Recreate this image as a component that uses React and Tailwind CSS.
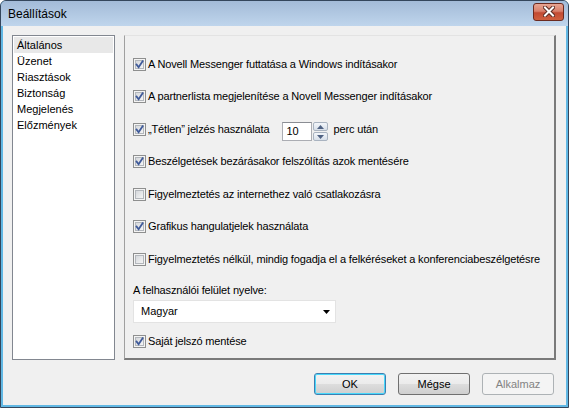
import React from "react";

const font = { fontFamily: '"Liberation Sans", Arial, sans-serif' };

const Check = ({ checked }) => (
  <svg width="13" height="13" viewBox="0 0 13 13" className="shrink-0">
    <defs>
      <linearGradient id="cbg" x1="0" y1="0" x2="1" y2="1">
        <stop offset="0" stopColor="#d3d6da" />
        <stop offset="1" stopColor="#f7f7f7" />
      </linearGradient>
    </defs>
    <rect x="0.5" y="0.5" width="12" height="12" fill="#f4f4f4" stroke="#8e8f8f" />
    <rect x="2.5" y="2.5" width="8" height="8" fill="url(#cbg)" stroke="#b3b7bc" />
    {checked && (
      <path
        d="M3.6 6.6 L5.6 9.2 L9.6 3.2"
        fill="none"
        stroke="#3f5a9a"
        strokeWidth="1.8"
        strokeLinecap="square"
      />
    )}
  </svg>
);

const Row = ({ checked, children, className = "" }) => (
  <div className={`flex h-[13px] items-center ${className}`}>
    <Check checked={checked} />
    <span className="ml-[2px] whitespace-nowrap text-[11px] leading-[13px] tracking-[-0.15px] text-black">
      {children}
    </span>
  </div>
);

const Spinner = () => (
  <div className="ml-[13px] -mt-[1px] flex h-[19px]">
    <div className="flex w-[30px] items-center border border-[#abadb3] border-t-[#8a8d93] bg-white pl-[3px] text-[11px] text-black">
      10
    </div>
    <div className="ml-[1px] flex w-[15px] flex-col gap-[1px]">
      <div className="flex h-[9px] items-center justify-center rounded-[2px] border border-[#a9b3c0] bg-gradient-to-b from-[#f3f6fa] to-[#d7dfe9]">
        <svg width="7" height="4" viewBox="0 0 7 4">
          <path d="M0 4 L3.5 0 L7 4 Z" fill="#4f6283" />
        </svg>
      </div>
      <div className="flex h-[9px] items-center justify-center rounded-[2px] border border-[#a9b3c0] bg-gradient-to-b from-[#f3f6fa] to-[#d7dfe9]">
        <svg width="7" height="4" viewBox="0 0 7 4">
          <path d="M0 0 L3.5 4 L7 0 Z" fill="#4f6283" />
        </svg>
      </div>
    </div>
  </div>
);

const Button = ({ children, variant }) => {
  const border =
    variant === "default"
      ? "border-[#3c7fb1] shadow-[inset_0_0_0_1px_#48d8fb]"
      : variant === "disabled"
      ? "border-[#adb2b5]"
      : "border-[#707070]";
  const bg =
    variant === "disabled"
      ? "bg-[#f4f4f4] text-[#838383]"
      : "bg-[linear-gradient(#f2f2f2_0%,#ebebeb_50%,#dddddd_50%,#cfcfcf_100%)] text-black";
  return (
    <div
      className={`flex h-[22px] w-[72px] items-center justify-center rounded-[3px] border text-[11px] ${border} ${bg}`}
    >
      {children}
    </div>
  );
};

const items = ["Általános", "Üzenet", "Riasztások", "Biztonság", "Megjelenés", "Előzmények"];

export default function App() {
  return (
    <div className="h-[408px] w-[569px] bg-white" style={font}>
      <div className="flex h-[408px] w-[569px] flex-col rounded-t-[6px] border border-[#34465c] bg-[#62b8e4]">
        {/* title bar */}
        <div className="flex h-[25px] items-center rounded-t-[5px] bg-gradient-to-b from-[#a3bbd8] to-[#bfd5ec] pl-[7px] pr-[4px]">
          <span className="text-[12px] text-black">Beállítások</span>
          <div className="ml-auto flex h-[18px] w-[31px] -mt-[4px] items-center justify-center rounded-[3px] border border-[#6b2a20] bg-[linear-gradient(#e8a593_0%,#d9806c_45%,#c24a33_55%,#d0603f_100%)]">
            <svg width="12" height="11" viewBox="0 0 12 11">
              <path
                d="M2 1.5 L10 9.5 M10 1.5 L2 9.5"
                stroke="#5a2a22"
                strokeWidth="4"
                strokeLinecap="square"
              />
              <path
                d="M2 1.5 L10 9.5 M10 1.5 L2 9.5"
                stroke="#ffffff"
                strokeWidth="2"
                strokeLinecap="square"
              />
            </svg>
          </div>
        </div>

        {/* client area */}
        <div className="mx-[2px] mb-[2px] flex flex-1 flex-col bg-[#f0f0f0]">
          <div className="mt-[9px] flex">
            {/* list */}
            <div className="ml-[9px] h-[325px] w-[103px] border border-[#828790] bg-white p-[1px]">
              {items.map((it, i) => (
                <div
                  key={it}
                  className={`h-[16px] pl-[3px] text-[11px] leading-[16px] text-black ${
                    i === 0 ? "bg-[#e8e8e8]" : ""
                  }`}
                >
                  {it}
                </div>
              ))}
            </div>

            {/* panel */}
            <div className="ml-[9px] flex h-[325px] w-[432px] flex-col border-t border-l border-r-2 border-b-2 border-t-[#e3e3e3] border-l-[#a0a0a0] border-r-[#7a7a7a] border-b-[#7a7a7a] pl-[8px]">
              <Row checked className="mt-[22px]">
                A Novell Messenger futtatása a Windows indításakor
              </Row>
              <Row checked className="mt-[19px]">
                A partnerlista megjelenítése a Novell Messenger indításakor
              </Row>
              <div className="mt-[20px] flex h-[13px] items-start">
                <Check checked />
                <span className="ml-[2px] whitespace-nowrap text-[11px] leading-[13px] tracking-[-0.15px] text-black">
                  „Tétlen” jelzés használata
                </span>
                <Spinner />
                <span className="ml-[5px] whitespace-nowrap text-[11px] leading-[13px] tracking-[-0.15px] text-black">
                  perc után
                </span>
              </div>
              <Row checked className="mt-[19px]">
                Beszélgetések bezárásakor felszólítás azok mentésére
              </Row>
              <Row className="mt-[20px]">
                Figyelmeztetés az internethez való csatlakozásra
              </Row>
              <Row checked className="mt-[19px]">
                Grafikus hangulatjelek használata
              </Row>
              <Row className="mt-[20px]">
                Figyelmeztetés nélkül, mindig fogadja el a felkéréseket a konferenciabeszélgetésre
              </Row>
              <div className="mt-[18px] h-[13px] text-[11px] leading-[13px] tracking-[-0.15px] text-black">
                A felhasználói felület nyelve:
              </div>
              <div className="mt-[3px] flex h-[23px] w-[203px] items-center border border-[#e3e3e3] bg-white pl-[7px] pr-[5px] text-[11px] text-black">
                Magyar
                <svg className="ml-auto" width="7" height="4" viewBox="0 0 7 4">
                  <path d="M0 0 L7 0 L3.5 4 Z" fill="#000" />
                </svg>
              </div>
              <Row checked className="mt-[12px]">
                Saját jelszó mentése
              </Row>
            </div>
          </div>

          {/* buttons */}
          <div className="mt-[13px] flex justify-end gap-[12px] pr-[12px]">
            <Button variant="default">OK</Button>
            <Button>Mégse</Button>
            <Button variant="disabled">Alkalmaz</Button>
          </div>
        </div>
      </div>
    </div>
  );
}
